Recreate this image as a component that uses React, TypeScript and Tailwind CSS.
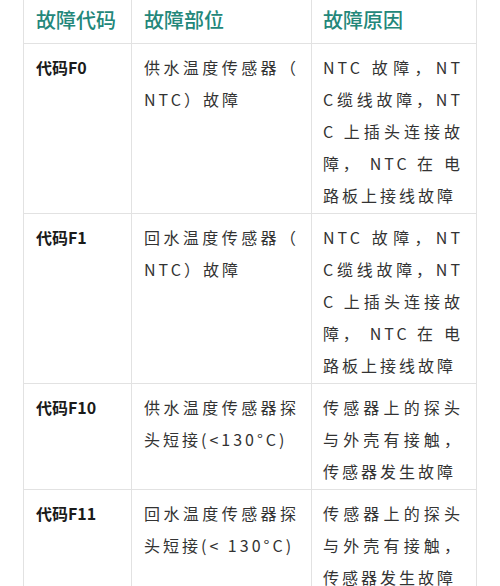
const FONT = "font-['Noto_Sans_CJK_SC','Noto_Sans',sans-serif]";

type Line = { text: string; justify?: boolean };

const rows: { code: string; part: Line[]; cause: Line[] }[] = [
  {
    code: '代码F0',
    part: [{ text: '供水温度传感器（', justify: true }, { text: 'NTC）故障' }],
    cause: [
      { text: 'NTC 故障，NT', justify: true },
      { text: 'C缆线故障，NT', justify: true },
      { text: 'C 上插头连接故', justify: true },
      { text: '障， NTC 在 电', justify: true },
      { text: '路板上接线故障' },
    ],
  },
  {
    code: '代码F1',
    part: [{ text: '回水温度传感器（', justify: true }, { text: 'NTC）故障' }],
    cause: [
      { text: 'NTC 故障，NT', justify: true },
      { text: 'C缆线故障，NT', justify: true },
      { text: 'C 上插头连接故', justify: true },
      { text: '障， NTC 在 电', justify: true },
      { text: '路板上接线故障' },
    ],
  },
  {
    code: '代码F10',
    part: [{ text: '供水温度传感器探', justify: true }, { text: '头短接(<130°C)' }],
    cause: [
      { text: '传感器上的探头', justify: true },
      { text: '与外壳有接触，', justify: true },
      { text: '传感器发生故障' },
    ],
  },
  {
    code: '代码F11',
    part: [{ text: '回水温度传感器探', justify: true }, { text: '头短接(< 130°C)' }],
    cause: [
      { text: '传感器上的探头', justify: true },
      { text: '与外壳有接触，', justify: true },
      { text: '传感器发生故障' },
    ],
  },
];

function Lines({ lines }: { lines: Line[] }) {
  return (
    <>
      {lines.map((l, i) => (
        <div
          key={i}
          className={
            l.justify
              ? 'text-justify [text-align-last:justify] whitespace-nowrap'
              : 'whitespace-nowrap'
          }
        >
          {l.text}
        </div>
      ))}
    </>
  );
}

export default function App() {
  return (
    <div className={`w-[500px] h-[586px] overflow-hidden bg-white ${FONT}`}>
      <div className="ml-[23px] w-[454px] border-l border-[#e2e2e2]">
        {/* Header */}
        <div className="grid grid-cols-[108px_180px_165px] border-b border-[#e2e2e2] text-[20px] leading-[32px] font-medium text-[#23877a]">
          <div className="border-r border-[#e2e2e2] pl-[12px] pt-[4px] pb-[7px]">故障代码</div>
          <div className="border-r border-[#e2e2e2] pl-[12px] pt-[4px] pb-[7px]">故障部位</div>
          <div className="border-r border-[#e2e2e2] pl-[11px] pt-[4px] pb-[7px]">故障原因</div>
        </div>

        {rows.map(row => (
          <div
            key={row.code}
            className="grid grid-cols-[108px_180px_165px] border-b border-[#e2e2e2] text-[16px] leading-[32px]"
          >
            <div className="border-r border-[#e2e2e2] pl-[12px] pt-[7px] pb-[2px] font-bold text-[#1a1a1a]">
              {row.code}
            </div>
            <div className="border-r border-[#e2e2e2] pl-[12px] pr-[12px] pt-[7px] pb-[2px] tracking-[3px] text-[#333]">
              <Lines lines={row.part} />
            </div>
            <div className="border-r border-[#e2e2e2] pl-[11px] pr-[13px] pt-[7px] pb-[2px] tracking-[3px] text-[#333]">
              <Lines lines={row.cause} />
            </div>
          </div>
        ))}
      </div>
    </div>
  );
}
